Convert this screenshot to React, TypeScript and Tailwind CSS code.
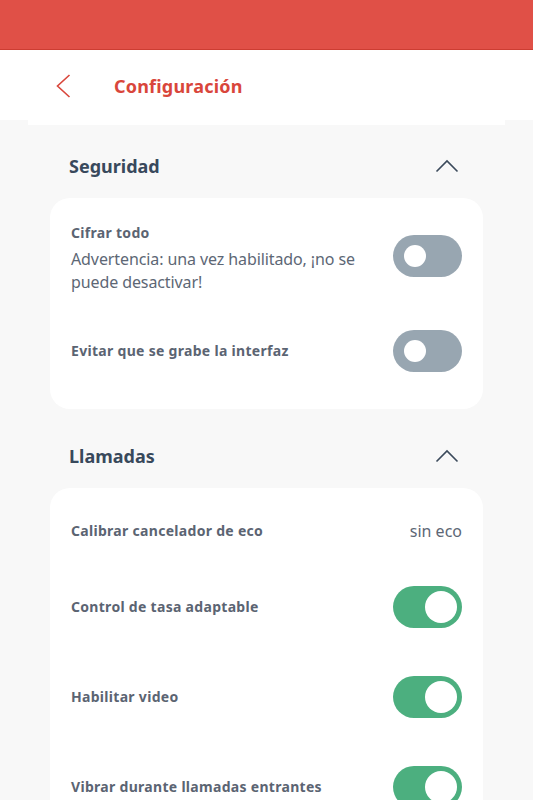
import React from "react";

const Toggle = ({ on }: { on: boolean }) => {
    return on ? (
        <div className="w-[69px] h-[42px] rounded-full bg-[#4caf7f] flex items-center justify-end pr-[5px] shrink-0">
            <div className="w-[32px] h-[32px] rounded-full bg-white" />
        </div>
    ) : (
        <div className="w-[69px] h-[42px] rounded-full bg-[#98a6b1] flex items-center pl-[11px] shrink-0">
            <div className="w-[22px] h-[22px] rounded-full bg-white" />
        </div>
    );
};

const ChevronUp = () => (
    <svg width="24" height="14" viewBox="0 0 24 14" fill="none">
        <path d="M1.5 12.5 L12 2 L22.5 12.5" stroke="#3b4a5b" strokeWidth="1.6" />
    </svg>
);

const SectionHeader = ({ title, className }: { title: string; className: string }) => (
    <div className={"flex items-center justify-between h-[26px] pl-[69px] pr-[74px] " + className}>
        <span className="text-[18px] font-bold text-[#38495c]">{title}</span>
        <ChevronUp />
    </div>
);

const Label = ({ children }: { children: React.ReactNode }) => (
    <span className="text-[14px] leading-[20px] font-bold text-[#5b6472] tracking-[0.3px]">{children}</span>
);

export default function App() {
    return (
        <div className="min-h-screen h-[800px] overflow-hidden bg-[#f8f8f8] font-['Noto_Sans',sans-serif]">
            {/* Status bar */}
            <div className="h-[50px] bg-[#e05047] border-b border-[#cc3d32]" />

            {/* Header */}
            <header className="h-[70px] bg-white flex items-center">
                <div className="pl-[56px] w-[114px] flex items-center pt-[2px]">
                    <svg width="15" height="24" viewBox="0 0 15 24" fill="none">
                        <path d="M13.5 1 L1.5 12 L13.5 23" stroke="#d9463b" strokeWidth="1.6" />
                    </svg>
                </div>
                <h1 className="text-[18px] font-bold text-[#d9463b] tracking-[0.2px] pt-[2px]">Configuración</h1>
            </header>
            <div className="mx-[28px] h-[5px] bg-white" />

            {/* Seguridad */}
            <SectionHeader title="Seguridad" className="mt-[28px]" />
            <div className="mx-[50px] mt-[19px] rounded-[20px] bg-white px-[21px] pt-[25px] pb-[37px]">
                <div className="flex items-start justify-between">
                    <div className="flex flex-col w-[300px]">
                        <Label>Cifrar todo</Label>
                        <p className="mt-[5px] text-[16px] leading-[23px] text-[#5d6775] tracking-[-0.1px]">
                            Advertencia: una vez habilitado, ¡no se puede desactivar!
                        </p>
                    </div>
                    <div className="mt-[12px]">
                        <Toggle on={false} />
                    </div>
                </div>
                <div className="mt-[36px] h-[42px] flex items-center justify-between">
                    <Label>Evitar que se grabe la interfaz</Label>
                    <Toggle on={false} />
                </div>
            </div>

            {/* Llamadas */}
            <SectionHeader title="Llamadas" className="mt-[34px]" />
            <div className="mx-[50px] mt-[19px] rounded-[20px] bg-white px-[21px] pt-[22px] pb-[37px]">
                <div className="h-[42px] flex items-center justify-between">
                    <Label>Calibrar cancelador de eco</Label>
                    <span className="text-[16px] text-[#5d6775]">sin eco</span>
                </div>
                <div className="mt-[34px] h-[42px] flex items-center justify-between">
                    <Label>Control de tasa adaptable</Label>
                    <Toggle on={true} />
                </div>
                <div className="mt-[48px] h-[42px] flex items-center justify-between">
                    <Label>Habilitar video</Label>
                    <Toggle on={true} />
                </div>
                <div className="mt-[48px] h-[42px] flex items-center justify-between">
                    <Label>Vibrar durante llamadas entrantes</Label>
                    <Toggle on={true} />
                </div>
            </div>
        </div>
    );
}
